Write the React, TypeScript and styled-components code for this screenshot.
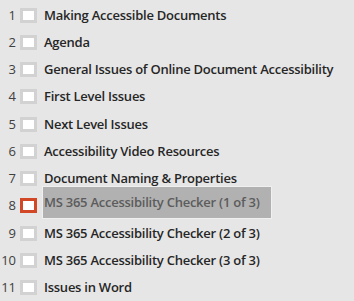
import styled, { createGlobalStyle } from "styled-components";

const GlobalStyle = createGlobalStyle`
  html, body {
    margin: 0;
    padding: 0;
    background: #e6e6e6;
  }
`;

const slides = [
  "Making Accessible Documents",
  "Agenda",
  "General Issues of Online Document Accessibility",
  "First Level Issues",
  "Next Level Issues",
  "Accessibility Video Resources",
  "Document Naming & Properties",
  "MS 365 Accessibility Checker (1 of 3)",
  "MS 365 Accessibility Checker (2 of 3)",
  "MS 365 Accessibility Checker (3 of 3)",
  "Issues in Word",
];

const SELECTED = 8;

const Outline = styled.div`
  width: 354px;
  height: 301px;
  box-sizing: border-box;
  padding-top: 1px;
  background: #e6e6e6;
  font-family: "Open Sans", "Noto Sans", sans-serif;
  overflow: hidden;
`;

const Row = styled.div`
  display: flex;
  align-items: center;
  height: 27.25px;
`;

const Num = styled.span`
  width: 18px;
  text-align: right;
  font-size: 13px;
  color: #404040;
  padding-right: 2px;
  box-sizing: border-box;
`;

const Thumb = styled.span<{ $active?: boolean }>`
  width: 17px;
  height: 15px;
  box-sizing: border-box;
  border: 3px solid ${(p) => (p.$active ? "#d24726" : "#d2d2d2")};
  background: #ffffff;
  margin-left: 2px;
  margin-top: 1px;
`;

const Title = styled.span<{ $active?: boolean }>`
  margin-left: 5px;
  font-size: 13px;
  font-weight: 600;
  letter-spacing: -0.25px;
  white-space: nowrap;
  color: ${(p) => (p.$active ? "#5c5c5c" : "#262626")};
  padding: ${(p) => (p.$active ? "6px 11px 7px 1px" : "0 0 0 2px")};
  margin-top: ${(p) => (p.$active ? "-6px" : "0")};
  background: ${(p) => (p.$active ? "#b1b1b1" : "transparent")};
  border: ${(p) => (p.$active ? "1px solid #f0f0f0" : "none")};
`;

export default function App() {
  return (
    <>
      <GlobalStyle />
      <Outline>
        {slides.map((s, i) => {
          const active = i + 1 === SELECTED;
          return (
            <Row key={i}>
              <Num>{i + 1}</Num>
              <Thumb $active={active} />
              <Title $active={active}>{s}</Title>
            </Row>
          );
        })}
      </Outline>
    </>
  );
}
